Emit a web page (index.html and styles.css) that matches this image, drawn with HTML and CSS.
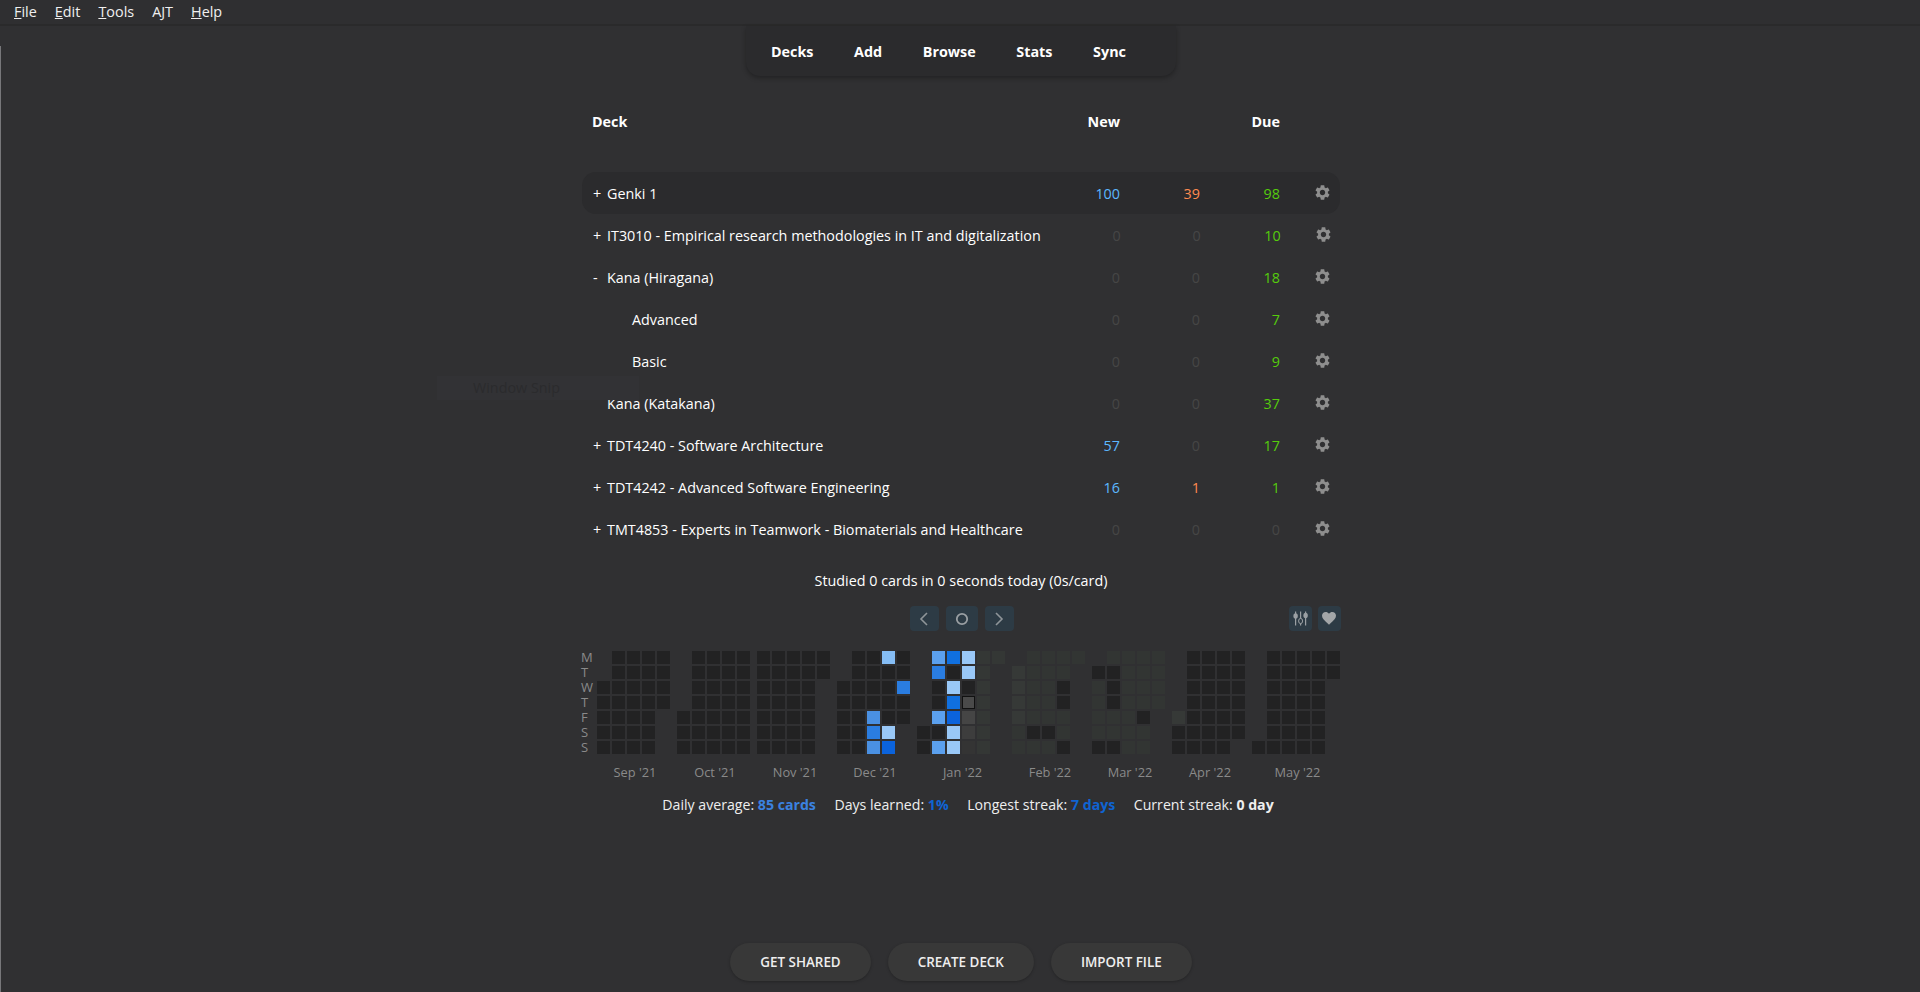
FILE: index.html
```html
<!DOCTYPE html>
<html lang="en">
<head>
    <meta charset="UTF-8">
    <meta name="viewport" content="width=device-width, initial-scale=1.0">
    <title>Anki</title>
    <link rel="stylesheet" href="styles.css">
</head>
<body>

    <svg class="defs" width="0" height="0">
        <symbol id="gear" viewBox="2 2 20 20">
            <path d="M19.14 12.94c.04-.3.06-.61.06-.94 0-.32-.02-.64-.07-.94l2.03-1.58c.18-.14.23-.41.12-.61l-1.92-3.32c-.12-.22-.37-.29-.59-.22l-2.39.96c-.5-.38-1.03-.7-1.62-.94l-.36-2.54c-.04-.24-.24-.41-.48-.41h-3.84c-.24 0-.43.17-.47.41l-.36 2.54c-.59.24-1.13.57-1.62.94l-2.39-.96c-.22-.08-.47 0-.59.22L2.74 8.87c-.12.21-.08.47.12.61l2.03 1.58c-.05.3-.09.63-.09.94s.02.64.07.94l-2.03 1.58c-.18.14-.23.41-.12.61l1.92 3.32c.12.22.37.29.59.22l2.39-.96c.5.38 1.03.7 1.62.94l.36 2.54c.05.24.24.41.48.41h3.84c.24 0 .44-.17.47-.41l.36-2.54c.59-.24 1.13-.56 1.62-.94l2.39.96c.22.08.47 0 .59-.22l1.92-3.32c.12-.22.07-.47-.12-.61l-2.01-1.58zM12 15.6c-1.98 0-3.6-1.62-3.6-3.6s1.62-3.6 3.6-3.6 3.6 1.62 3.6 3.6-1.62 3.6-3.6 3.6z"/>
        </symbol>
    </svg>

    <!-- Menu bar -->
    <div class="menubar">
        <span><u>F</u>ile</span>
        <span><u>E</u>dit</span>
        <span><u>T</u>ools</span>
        <span>AJT</span>
        <span><u>H</u>elp</span>
    </div>

    <div class="window">
        <div class="toolbar">
            <a>Decks</a>
            <a>Add</a>
            <a>Browse</a>
            <a>Stats</a>
            <a>Sync</a>
        </div>

        <!-- Deck list -->
        <div class="decks">
            <div class="deck-head">
                <div class="name">Deck</div>
                <div class="num">New</div>
                <div class="num"></div>
                <div class="num">Due</div>
                <div></div>
            </div>

            <div class="deck current">
                <div class="name"><span class="toggle">+</span>Genki 1</div>
                <div class="num new">100</div>
                <div class="num learn">39</div>
                <div class="num due">98</div>
                <svg class="gear"><use href="#gear"/></svg>
            </div>
            <div class="deck">
                <div class="name"><span class="toggle">+</span>IT3010 - Empirical research methodologies in IT and digitalization</div>
                <div class="num zero">0</div>
                <div class="num zero">0</div>
                <div class="num due">10</div>
                <svg class="gear"><use href="#gear"/></svg>
            </div>
            <div class="deck">
                <div class="name"><span class="toggle">-</span>Kana (Hiragana)</div>
                <div class="num zero">0</div>
                <div class="num zero">0</div>
                <div class="num due">18</div>
                <svg class="gear"><use href="#gear"/></svg>
            </div>
            <div class="deck">
                <div class="name child">Advanced</div>
                <div class="num zero">0</div>
                <div class="num zero">0</div>
                <div class="num due">7</div>
                <svg class="gear"><use href="#gear"/></svg>
            </div>
            <div class="deck">
                <div class="name child">Basic</div>
                <div class="num zero">0</div>
                <div class="num zero">0</div>
                <div class="num due">9</div>
                <svg class="gear"><use href="#gear"/></svg>
            </div>
            <div class="deck">
                <div class="name"><span class="toggle"></span>Kana (Katakana)</div>
                <div class="num zero">0</div>
                <div class="num zero">0</div>
                <div class="num due">37</div>
                <svg class="gear"><use href="#gear"/></svg>
            </div>
            <div class="deck">
                <div class="name"><span class="toggle">+</span>TDT4240 - Software Architecture</div>
                <div class="num new">57</div>
                <div class="num zero">0</div>
                <div class="num due">17</div>
                <svg class="gear"><use href="#gear"/></svg>
            </div>
            <div class="deck">
                <div class="name"><span class="toggle">+</span>TDT4242 - Advanced Software Engineering</div>
                <div class="num new">16</div>
                <div class="num learn">1</div>
                <div class="num due">1</div>
                <svg class="gear"><use href="#gear"/></svg>
            </div>
            <div class="deck">
                <div class="name"><span class="toggle">+</span>TMT4853 - Experts in Teamwork - Biomaterials and Healthcare</div>
                <div class="num zero">0</div>
                <div class="num zero">0</div>
                <div class="num zero">0</div>
                <svg class="gear"><use href="#gear"/></svg>
            </div>
        </div>

        <div class="studied">Studied 0 cards in 0 seconds today (0s/card)</div>

        <!-- Heatmap controls -->
        <div class="heat-controls">
            <div class="heat-nav">
                <button class="heat-btn wide">
                    <svg width="14" height="16" viewBox="0 0 14 16"><path d="M10 2 L4 8 L10 14" fill="none" stroke="#8f9599" stroke-width="1.6"/></svg>
                </button>
                <button class="heat-btn wider">
                    <svg width="14" height="14" viewBox="0 0 14 14"><circle cx="7" cy="7" r="5.2" fill="none" stroke="#9a9fa3" stroke-width="1.8"/></svg>
                </button>
                <button class="heat-btn wide">
                    <svg width="14" height="16" viewBox="0 0 14 16"><path d="M4 2 L10 8 L4 14" fill="none" stroke="#8f9599" stroke-width="1.6"/></svg>
                </button>
            </div>
            <div class="heat-options">
                <button class="heat-btn">
                    <svg width="15" height="15" viewBox="0 0 15 15" fill="#9a9fa3">
                        <rect x="2" y="0.5" width="1.2" height="14"/>
                        <rect x="7" y="0.5" width="1.2" height="14"/>
                        <rect x="12" y="0.5" width="1.2" height="14"/>
                        <ellipse cx="2.6" cy="5" rx="2.2" ry="2.8"/>
                        <ellipse cx="7.6" cy="10" rx="2" ry="2.6" fill="#2d3b45" stroke="#9a9fa3" stroke-width="1"/>
                        <ellipse cx="12.6" cy="4.5" rx="2.2" ry="2.8"/>
                    </svg>
                </button>
                <button class="heat-btn">
                    <svg width="14" height="13" viewBox="0 0 24 22" fill="#a3a6a8"><path d="M12 21.500 10.300 20C4.200 14.500 0 10.700 0 6.300 0 2.700 2.800 0 6.400 0c2 0 4.100 1 5.600 2.700C13.500 1 15.600 0 17.600 0 21.200 0 24 2.700 24 6.300c0 4.400-4.200 8.200-10.300 13.700L12 21.500z"/></svg>
                </button>
            </div>
        </div>

        <!-- Review heatmap, filled in by heatmap.js -->
        <div class="heatmap">
            <div class="weekdays">
                <span>M</span><span>T</span><span>W</span><span>T</span><span>F</span><span>S</span><span>S</span>
            </div>
            <div class="months" id="months"></div>
        </div>

        <div class="heat-stats">
            <span>Daily average: <b class="blue1">85 cards</b></span>
            <span>Days learned: <b class="blue2">1%</b></span>
            <span>Longest streak: <b class="blue2">7 days</b></span>
            <span>Current streak: <b>0 day</b></span>
        </div>

        <div class="bottom-buttons">
            <button class="pill">GET SHARED</button>
            <button class="pill">CREATE DECK</button>
            <button class="pill">IMPORT FILE</button>
        </div>

        <div class="snip-ghost">Window Snip</div>
    </div>

    <script src="heatmap.js"></script>
</body>
</html>
```

FILE: styles.css
```css
* {
    box-sizing: border-box;
}

html, body {
    height: 100%;
}

body {
    font-family: "Open Sans", "Noto Sans", Arial, sans-serif;
    background-color: #2f2f31;
    color: #fff;
    margin: 0;
    padding: 0;
    font-size: 14.35px;
    overflow: hidden;
    display: flex;
    flex-direction: column;
}

.defs {
    position: absolute;
}

/* Menu bar */
.menubar {
    height: 26px;
    flex: none;
    display: flex;
    gap: 18px;
    padding: 1px 0 0 14px;
    font-size: 14.4px;
    line-height: 22px;
    color: #f0f0f0;
    border-bottom: 2px solid #2a2a2b;
}

/* Main area */
.window {
    flex: 1;
    position: relative;
    display: flex;
    flex-direction: column;
    align-items: center;
    padding-left: 2px;
    background-color: #303032;
}

.window::before {
    content: "";
    position: absolute;
    left: 0;
    top: 20px;
    bottom: 0;
    width: 1px;
    background-color: #77777a;
}

/* Toolbar */
.toolbar {
    width: 430px;
    height: 50px;
    display: flex;
    align-items: center;
    justify-content: space-between;
    padding: 0 50px 0 25px;
    background-color: #2b2b2d;
    border-radius: 0 0 14px 14px;
    box-shadow: 0px 2px 5px rgba(0, 0, 0, 0.3);
    font-weight: bold;
    font-size: 14.35px;
}

/* Decks */
.decks {
    width: 758px;
    margin-top: 29px;
}

.deck-head, .deck {
    display: grid;
    grid-template-columns: 1fr 80px 80px 80px 60px;
    align-items: center;
}

.deck-head {
    height: 32px;
    margin-bottom: 35px;
    font-weight: bold;
}

.deck-head .name {
    padding-left: 10px;
}

.deck {
    height: 42px;
    border-radius: 14px;
}

.deck.current {
    background-color: #2b2b2d;
}

.name {
    padding-left: 11px;
    white-space: nowrap;
}

.name.child {
    padding-left: 50px;
}

.toggle {
    display: inline-block;
    width: 14px;
}

.num {
    text-align: right;
}

.new {
    color: #5cb8ff;
}

.learn {
    color: #ff8a50;
}

.due {
    color: #55cc0c;
}

.zero {
    color: #464646;
}

.gear {
    width: 15px;
    height: 15px;
    margin-left: 35px;
    margin-top: -1px;
    fill: #8e8e8e;
}

.studied {
    margin-top: 20px;
    height: 22px;
    line-height: 22px;
}

/* Heatmap */
.heat-controls {
    width: 759px;
    margin-top: 14px;
    position: relative;
    display: flex;
    justify-content: flex-end;
}

.heat-nav {
    position: absolute;
    left: 328px;
    display: flex;
    gap: 7px;
}

.heat-options {
    display: flex;
    gap: 6px;
}

.heat-btn {
    width: 23px;
    height: 25px;
    padding: 0;
    border: none;
    border-radius: 4px;
    background-color: #2d3b45;
    display: flex;
    align-items: center;
    justify-content: center;
}

.heat-btn.wide {
    width: 29px;
}

.heat-btn.wider {
    width: 32px;
}

.heatmap {
    width: 758px;
    margin-top: 20px;
    display: flex;
}

.weekdays {
    width: 15px;
    display: flex;
    flex-direction: column;
    font-size: 13px;
    color: #8a8a8a;
    margin-top: -1px;
    margin-left: -1px;
    margin-right: 1px;
}

.weekdays span {
    height: 15px;
    line-height: 15px;
}

.months {
    display: flex;
    gap: 7px;
}

.month-weeks {
    display: flex;
    gap: 2px;
}

.week {
    display: flex;
    flex-direction: column;
    gap: 2px;
}

.cell {
    width: 13px;
    height: 13px;
}

.month-label {
    margin-top: 9px;
    padding-left: 3px;
    text-align: center;
    font-size: 12.8px;
    line-height: 18px;
    color: #8a8a8a;
}

.c-d { background-color: #222223; }
.c-g { background-color: #343735; }
.c-n { background-color: #363937; }
.c-o { background-color: #323533; }
.c-a { background-color: #85bdf5; }
.c-b { background-color: #99c8f7; }
.c-c { background-color: #5ba0ee; }
.c-e { background-color: #4a90e2; }
.c-f { background-color: #2a7de1; }
.c-h { background-color: #1070e0; }
.c-i { background-color: #0b63dc; }
.c-j { background-color: #454545; }
.c-k { background-color: #3d3d3d; }
.c-l { background-color: #343434; }
.c-t { background-color: #4a4a4a; border: 1px solid #111; }

.heat-stats {
    margin-top: 14px;
    margin-left: 14px;
    display: flex;
    gap: 18.5px;
    line-height: 20px;
    font-size: 14.15px;
    color: #eee;
}

.blue1 {
    color: #3b82e0;
}

.blue2 {
    color: #0f64d2;
}

/* Bottom buttons */
.bottom-buttons {
    margin-top: auto;
    margin-bottom: 11px;
    display: flex;
    gap: 17px;
}

.pill {
    height: 38px;
    padding: 0 30px;
    border: none;
    border-radius: 19px;
    background-color: #383838;
    color: #eee;
    font-family: inherit;
    font-size: 13.4px;
    font-weight: 600;
    box-shadow: 0px 1px 3px rgba(0, 0, 0, 0.25);
}

/* Faded snipping tool label left over in the capture */
.snip-ghost {
    position: absolute;
    left: 437px;
    top: 350px;
    width: 202px;
    height: 24px;
    padding-left: 36px;
    line-height: 24px;
    font-size: 14.35px;
    color: #2b2b2d;
    background-color: #323235;
}
```

FILE: heatmap.js
```js
// one string per week, Monday first, one letter per day
// . = nothing, d = no reviews, g/n/o = future days, the rest are review levels
const months = [
    { label: "Sep '21", weeks: ["..ddddd", "ddddddd", "ddddddd", "ddddddd", "dddd..."] },
    { label: "Oct '21", weeks: ["....ddd", "ddddddd", "ddddddd", "ddddddd", "ddddddd"] },
    { label: "Nov '21", weeks: ["ddddddd", "ddddddd", "ddddddd", "ddddddd", "dd....."] },
    { label: "Dec '21", weeks: ["..ddddd", "ddddddd", "ddddefe", "addddbi", "ddfdd.."] },
    { label: "Jan '22", weeks: [".....dd", "cfddcdc", "hdbhibb", "bbdtjkl", "ggggggg", "g......"] },
    { label: "Feb '22", weeks: [".nnnnoo", "oooooDo", "oooooDo", "ooDDooD", "o......"] },
    { label: "Mar '22", weeks: [".Dooood", "oDDDooD", "ooooooo", "ooooDoo", "oooo..."] },
    { label: "Apr '22", weeks: ["....ndd", "ddddddd", "ddddddd", "ddddddd", "dddddd."] },
    { label: "May '22", weeks: ["......d", "ddddddd", "ddddddd", "ddddddd", "ddddddd", "dd....."] }
];

let monthsEl = document.getElementById("months");

months.forEach(function (month) {
    let monthEl = document.createElement("div");
    let weeksEl = document.createElement("div");
    weeksEl.classList.add("month-weeks");

    month.weeks.forEach(function (week) {
        let weekEl = document.createElement("div");
        weekEl.classList.add("week");
        for (let day of week) {
            let cell = document.createElement("div");
            cell.classList.add("cell");
            if (day !== ".") cell.classList.add("c-" + day.toLowerCase());
            weekEl.appendChild(cell);
        }
        weeksEl.appendChild(weekEl);
    });

    let label = document.createElement("div");
    label.classList.add("month-label");
    label.textContent = month.label;

    monthEl.appendChild(weeksEl);
    monthEl.appendChild(label);
    monthsEl.appendChild(monthEl);
});
```
